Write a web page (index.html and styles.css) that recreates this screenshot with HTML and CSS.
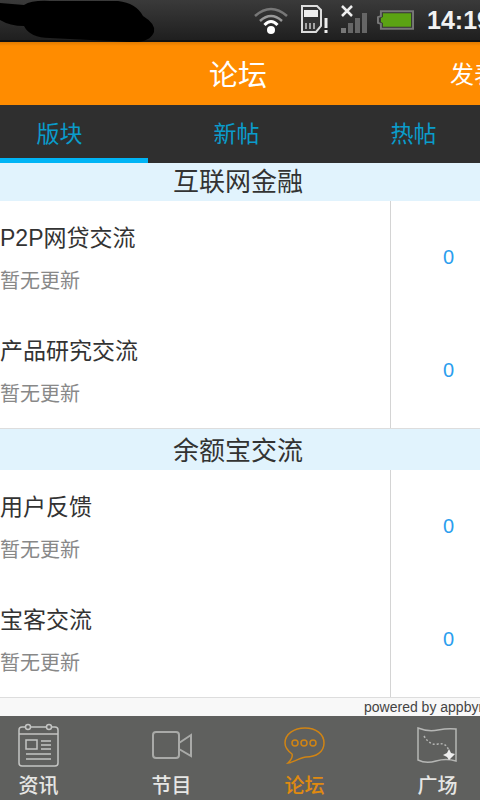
FILE: index.html
```html
<!DOCTYPE html>
<html lang="zh-CN">
<head>
    <meta charset="UTF-8">
    <meta name="viewport" content="width=device-width, initial-scale=1.0">
    <title>论坛</title>
    <link rel="stylesheet" href="styles.css">
</head>
<body>
<div class="app">

    <!-- Status bar -->
    <div class="statusbar">
        <svg class="scribble" width="156" height="44" viewBox="0 0 156 44">
            <path d="M0 3 L24 5 Q32 0 50 1 L118 1 Q136 3 143 16 Q156 24 154 32 Q150 43 130 42 L50 38 Q30 38 24 26 Q10 26 0 20 Z" fill="#000"/>
        </svg>
        <svg class="st-icon wifi" width="36" height="30" viewBox="0 0 36 30">
            <path d="M2 11 Q18 -3 34 11" fill="none" stroke="#777" stroke-width="2.5"/>
            <path d="M7 16 Q18 6 29 16" fill="none" stroke="#999" stroke-width="2.5"/>
            <path d="M11.500 20 Q18 13 24.500 20" fill="none" stroke="#fff" stroke-width="3"/>
            <circle cx="18" cy="25" r="4" fill="#fff"/>
        </svg>
        <svg class="st-icon" width="30" height="30" viewBox="0 0 30 30">
            <path d="M2 1 H17 L21 5 V21 L16 27 H2 Z" fill="#333" stroke="#ddd" stroke-width="2"/>
            <rect x="4" y="5" width="14" height="7" fill="#eee"/>
            <path d="M6 18 V24 M10 18 V24 M14 18 V24" stroke="#ccc" stroke-width="1.500"/>
            <path d="M26 13 V23" stroke="#eee" stroke-width="3"/>
            <rect x="24.500" y="25" width="3" height="3" fill="#eee"/>
        </svg>
        <svg class="st-icon" width="27" height="30" viewBox="0 0 27 30">
            <path d="M2 1 L12 11 M12 1 L2 11" stroke="#eee" stroke-width="2.500"/>
            <rect x="1" y="23" width="5" height="5" fill="#777"/>
            <rect x="8" y="18" width="5" height="10" fill="#666"/>
            <rect x="15" y="13" width="5" height="15" fill="#666"/>
            <rect x="22" y="8" width="5" height="20" fill="#666"/>
        </svg>
        <svg class="st-icon battery" width="37" height="22" viewBox="0 0 38 22">
            <path d="M4 2 H37 V20 H4 V15 L1 14 V8 L4 7 Z" fill="#333" stroke="#777" stroke-width="2"/>
            <path d="M6 4 H35 V18 H6 V14 L4 13 V9 L6 8 Z" fill="#5ba313"/>
        </svg>
        <span class="clock">14:19</span>
    </div>

    <!-- Title bar -->
    <header class="titlebar">
        <h1>论坛</h1>
        <a class="post-link" href="#">发表</a>
    </header>

    <!-- Tabs -->
    <nav class="tabs">
        <a class="tab active" href="#">版块</a>
        <a class="tab" href="#">新帖</a>
        <a class="tab" href="#">热帖</a>
    </nav>

    <!-- Forum list -->
    <main class="forum">
        <h2 class="group-title">互联网金融</h2>
        <div class="row">
            <div class="row-info">
                <p class="row-name">P2P网贷交流</p>
                <p class="row-sub">暂无更新</p>
            </div>
            <div class="row-count">0</div>
        </div>
        <div class="row">
            <div class="row-info">
                <p class="row-name">产品研究交流</p>
                <p class="row-sub">暂无更新</p>
            </div>
            <div class="row-count">0</div>
        </div>

        <h2 class="group-title tall">余额宝交流</h2>
        <div class="row">
            <div class="row-info">
                <p class="row-name">用户反馈</p>
                <p class="row-sub">暂无更新</p>
            </div>
            <div class="row-count">0</div>
        </div>
        <div class="row">
            <div class="row-info">
                <p class="row-name">宝客交流</p>
                <p class="row-sub">暂无更新</p>
            </div>
            <div class="row-count">0</div>
        </div>
    </main>

    <div class="powered">powered by appbyme</div>

    <!-- Bottom navigation -->
    <footer class="bottom-nav">
        <a class="nav-item" href="#">
            <svg width="44" height="46" viewBox="0 0 44 46" fill="none" stroke="#c4c5c3" stroke-width="1.500">
                <rect x="2" y="5" width="39" height="39" rx="3"/>
                <path d="M2 12 H41"/>
                <rect x="9" y="18" width="11" height="9"/>
                <path d="M24 19 H34 M24 23 H34 M24 27 H34 M9 32 H34 M9 37 H34"/>
                <circle cx="11" cy="5" r="2.500" fill="#5f605e"/>
                <circle cx="32" cy="5" r="2.500" fill="#5f605e"/>
            </svg>
            <span>资讯</span>
        </a>
        <a class="nav-item" href="#">
            <svg width="44" height="46" viewBox="0 0 44 46" fill="none" stroke="#a9aaa8" stroke-width="2">
                <rect x="3" y="10" width="26" height="26" rx="3"/>
                <path d="M29 21 L41 13 V34 L29 27 Z"/>
            </svg>
            <span>节目</span>
        </a>
        <a class="nav-item active" href="#">
            <svg width="44" height="46" viewBox="0 0 44 46" fill="none" stroke="#d08414" stroke-width="1.500">
                <path d="M22 6 C33 6 41 12 41 21 C41 30 33 35 23 35 C18 35 12 40 5 41 C8 38 10 35 9 32 C5 29 2 26 2 21 C2 12 11 6 22 6 Z"/>
                <circle cx="12" cy="21" r="3"/>
                <circle cx="21" cy="21" r="3"/>
                <circle cx="30" cy="21" r="3"/>
            </svg>
            <span>论坛</span>
        </a>
        <a class="nav-item" href="#">
            <svg width="44" height="46" viewBox="0 0 44 46" fill="none" stroke="#b5b6b4" stroke-width="1.500">
                <path d="M2 6 Q12 10 22 8 T40 7 V39 Q30 36 20 39 T2 38 Z"/>
                <path d="M8 14 Q14 24 22 22 T33 29" stroke-dasharray="2 2"/>
                <path d="M33 27 L35 31 L39 32 L36 35 L33 38 L31 35 L27 33 L31 31 Z" fill="#eee" stroke="none"/>
            </svg>
            <span>广场</span>
        </a>
    </footer>

</div>
</body>
</html>
```

FILE: styles.css
```css
html, body {
    margin: 0;
    padding: 0;
}

body {
    font-family: "Liberation Sans", "Noto Sans CJK SC", sans-serif;
}

.app {
    display: flex;
    flex-direction: column;
    width: 480px;
    height: 800px;
    overflow: hidden;
    background-color: #fff;
}

/* Status bar */
.statusbar {
    position: relative;
    display: flex;
    align-items: center;
    justify-content: flex-end;
    flex: none;
    height: 40px;
    background: linear-gradient(#3a3a3a, #1f1f1f);
    border-bottom: 2px solid #111;
}

.scribble {
    position: absolute;
    left: 0;
    top: 0;
}

.st-icon {
    flex: none;
    margin-right: 10px;
}

.st-icon.wifi {
    margin-right: 11px;
}

.st-icon.battery {
    margin-right: 13px;
}

.clock {
    flex: none;
    width: 53px;
    white-space: nowrap;
    color: #f2f2f2;
    font-size: 25px;
    font-weight: bold;
}

/* Title bar */
.titlebar {
    position: relative;
    display: flex;
    align-items: center;
    justify-content: center;
    flex: none;
    height: 63px;
    padding: 0 4px 2px 0;
    box-sizing: border-box;
    background: linear-gradient(#e07a00, #ff8c00 4px);
    color: #fff;
}

.titlebar h1 {
    margin: 0;
    font-size: 29px;
    font-weight: normal;
}

.post-link {
    position: absolute;
    left: 450px;
    top: 13px;
    white-space: nowrap;
    color: #fff;
    font-size: 24px;
    text-decoration: none;
}

/* Tabs run past both sides of the window */
.tabs {
    display: flex;
    flex: none;
    width: 531px;
    height: 58px;
    margin-left: -29px;
    background-color: #2f2f2f;
}

.tab {
    display: flex;
    align-items: center;
    justify-content: center;
    flex: 1;
    box-sizing: border-box;
    border-bottom: 5px solid transparent;
    color: #0a9ccb;
    font-size: 23px;
    text-decoration: none;
}

.tab.active {
    border-bottom-color: #00b4f5;
}

/* Forum list */
.forum {
    flex: none;
}

.group-title {
    height: 38px;
    margin: 0;
    padding-right: 4px;
    background-color: #e1f3fd;
    color: #333;
    font-size: 26px;
    font-weight: normal;
    line-height: 38px;
    text-align: center;
}

.group-title.tall {
    height: 42px;
    line-height: 44px;
    border-top: 1px solid #ddd;
    box-sizing: border-box;
}

.row {
    display: flex;
    height: 114px;
}

.row + .row {
    height: 113px;
}

.row-info {
    flex: 1;
    padding-top: 20px;
}

.row + .row .row-info {
    padding-top: 19px;
}

.row-name {
    margin: 0;
    color: #333;
    font-size: 23px;
    line-height: 34px;
}

.row-sub {
    margin: 12px 0 0;
    color: #888;
    font-size: 20px;
    line-height: 28px;
}

.row-count {
    display: flex;
    align-items: center;
    justify-content: center;
    flex: none;
    box-sizing: border-box;
    width: 116px;
    margin-right: -26px;
    padding-bottom: 2px;
    border-left: 1px solid #d4d4d4;
    color: #2b9eee;
    font-size: 20px;
}

/* Powered by */
.powered {
    flex: none;
    height: 19px;
    box-sizing: border-box;
    border-top: 1px solid #ddd;
    background-color: #f8f8f8;
    padding-left: 364px;
    white-space: nowrap;
    overflow: hidden;
    color: #444;
    font-size: 14px;
    line-height: 18px;
}

/* Bottom navigation, also wider than the window */
.bottom-nav {
    display: flex;
    flex: none;
    width: 532px;
    height: 84px;
    margin-left: -28px;
    background-color: #5f605e;
}

.nav-item {
    display: flex;
    flex-direction: column;
    align-items: center;
    flex: 1;
    padding-top: 6px;
    color: #e6e6e4;
    font-size: 20px;
    font-weight: 500;
    line-height: 24px;
    text-decoration: none;
}

.nav-item svg {
    margin-bottom: 6px;
}

.nav-item.active {
    color: #e08a10;
}
```
